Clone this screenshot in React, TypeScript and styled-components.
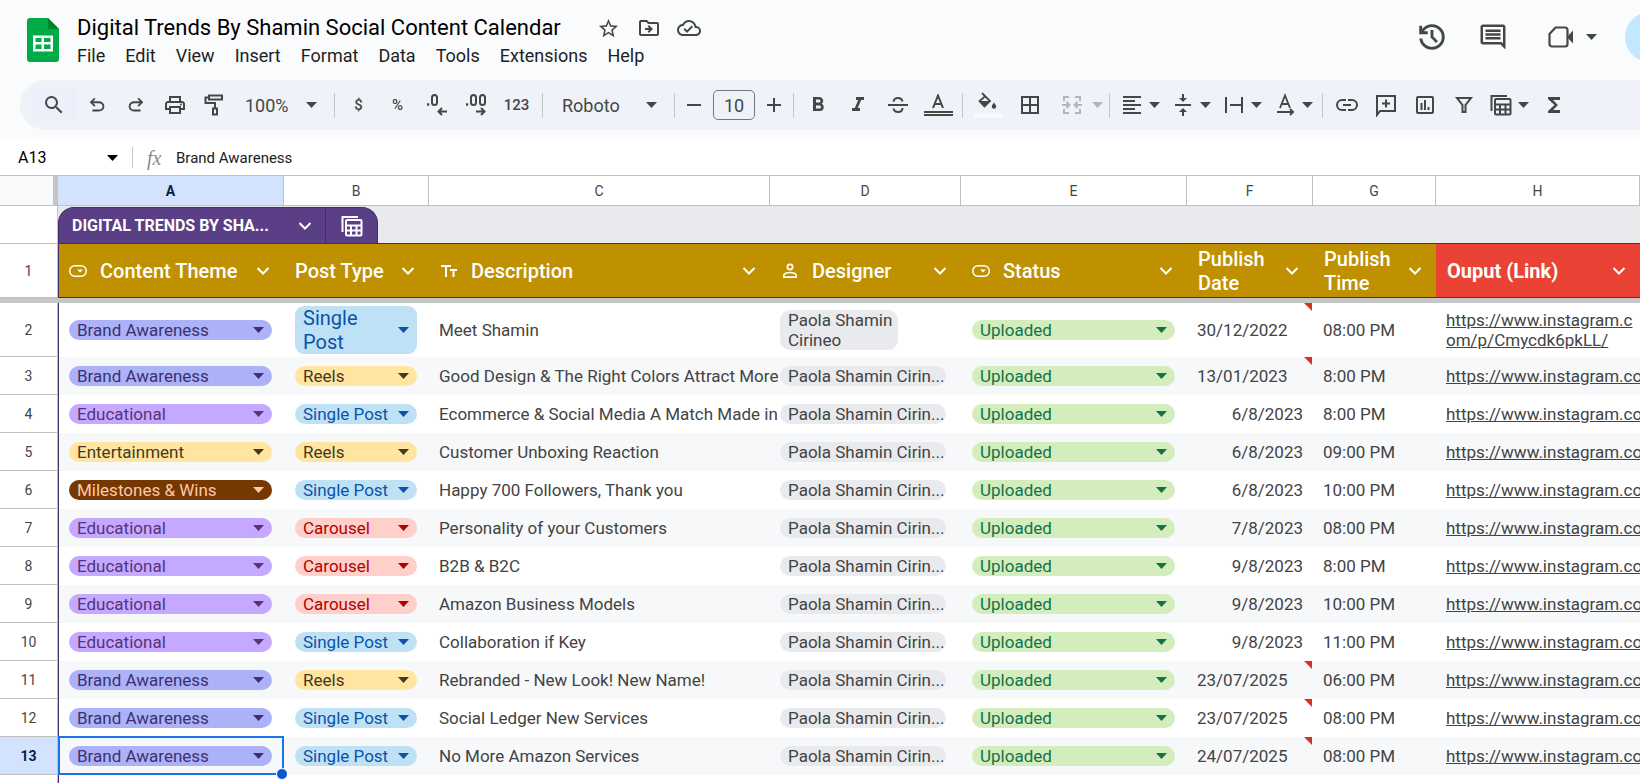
import React from 'react';
import styled, { createGlobalStyle, css } from 'styled-components';
import {
  MdSearch, MdStarBorder, MdOutlineDriveFileMove, MdOutlineCloudDone, MdOutlineComment,
  MdOutlinePrint, MdFormatBold, MdFormatItalic, MdBorderAll, MdFormatAlignLeft,
  MdVerticalAlignCenter, MdFunctions,
} from 'react-icons/md';

const sans = `Roboto, "Liberation Sans", sans-serif`;
const ink = '#444746';
const line = '#c0c0c0';
const tableEdge = '#442f65';

const GlobalStyle = createGlobalStyle`
  *, *::before, *::after { box-sizing: border-box; }
  body { margin: 0; background: #fff; font-family: ${sans}; }
  button, input, select { font-family: inherit; margin: 0; padding: 0; border: 0; background: none; color: inherit; outline: 0; }
  svg { display: block; flex: none; }
`;

const Page = styled.div`
  height: 100vh;
  overflow: hidden;
  display: flex;
  flex-direction: column;
`;

/* ---------- title bar ---------- */
const Top = styled.header`
  flex: none;
  background: #f9fbfd;
  padding-bottom: 10px;
  overflow: hidden;
`;
const TitleBar = styled.div`
  display: flex;
  height: 80px;
  padding-left: 27px;
`;
const LogoLink = styled.a`
  margin-top: 18px;
  width: 32px;
`;
const TitleBlock = styled.div`
  margin-left: 18px;
  padding-top: 12px;
  flex: 1;
  min-width: 0;
`;
const TitleRow = styled.div`
  display: flex;
  align-items: center;
  height: 32px;
`;
const DocTitle = styled.h1`
  margin: 0 28px 0 0;
  font-size: 22px;
  line-height: 32px;
  font-weight: 400;
  color: #000;
  white-space: nowrap;
`;
const TitleIcon = styled.button`
  width: 40px;
  height: 32px;
  display: grid;
  place-items: center;
  color: ${ink};
`;
const MenuBar = styled.nav`
  display: flex;
  gap: 20px;
  height: 24px;
`;
const MenuItem = styled.button`
  font-size: 18px;
  line-height: 24px;
  color: #1f1f1f;
`;
const Actions = styled.div`
  display: flex;
  align-items: center;
  height: 74px;
  margin-right: -35px;
  color: ${ink};
`;
const ActionButton = styled.button<{ $w: number }>`
  display: flex;
  align-items: center;
  justify-content: center;
  gap: 12px;
  width: ${p => p.$w}px;
  height: 48px;
`;
const ShareButton = styled.button`
  width: 50px;
  height: 50px;
  border-radius: 25px;
  background: #c2e7ff;
  margin-left: 4px;
`;

/* ---------- toolbar ---------- */
const Toolbar = styled.div`
  display: flex;
  align-items: center;
  height: 50px;
  margin-left: 20px;
  padding-left: 11px;
  border-radius: 25px 0 0 25px;
  background: #eff2f8;
  color: ${ink};
  white-space: nowrap;
  overflow: hidden;
`;
const Tool = styled.button<{ $w?: number }>`
  width: ${p => p.$w ?? 39}px;
  height: 34px;
  flex: none;
  display: flex;
  align-items: center;
  justify-content: center;
  font-size: 15px;
  font-weight: 500;
`;
const SearchTool = styled(Tool)`
  background: #edf0fa;
  border-radius: 4px;
`;
const DropTool = styled(Tool)<{ $off?: boolean }>`
  justify-content: flex-start;
  padding-left: ${p => (p.$off ? 9 : 6)}px;
  gap: ${p => (p.$off ? 8 : 5)}px;
  opacity: ${p => (p.$off ? 0.35 : 1)};
`;
const Divider = styled.span`
  width: 1px;
  height: 25px;
  margin: 0 4px;
  flex: none;
  background: #c7c7c7;
`;
const PickerBox = styled.label<{ $w: number; $pad: number }>`
  position: relative;
  width: ${p => p.$w}px;
  flex: none;
  select {
    appearance: none;
    width: 100%;
    height: 34px;
    padding-left: ${p => p.$pad}px;
    font-size: 18px;
  }
  svg {
    position: absolute;
    right: 13px;
    top: 14px;
    pointer-events: none;
  }
`;
const SizeInput = styled.input`
  width: 42px;
  height: 30px;
  margin: 0 4px;
  flex: none;
  border: 1px solid #747775;
  border-radius: 5px;
  font-size: 18px;
  text-align: center;
`;
const ColorStack = styled.span<{ $bar: string }>`
  display: flex;
  flex-direction: column;
  align-items: center;
  width: 29px;
  gap: 2px;
  &::after {
    content: '';
    width: 29px;
    height: 5px;
    border: solid ${p => p.$bar};
    border-width: 2px 0;
    background: #f8f9fc;
  }
`;

/* ---------- formula bar ---------- */
const FormulaBar = styled.div`
  display: flex;
  align-items: center;
  height: 36px;
  border-bottom: 1px solid ${line};
  background: #fff;
  flex: none;
`;
const NameBox = styled.input`
  width: 89px;
  margin-left: 18px;
  font-size: 16px;
  color: #000;
`;
const FormulaDivider = styled.span`
  width: 1px;
  height: 21px;
  margin: 0 14px;
  background: #c7c7c7;
`;
const Fx = styled.span`
  width: 18px;
  font: italic 20px/20px "Liberation Serif", serif;
  color: #8a8a8a;
  margin-right: 11px;
`;
const FormulaInput = styled.input`
  flex: 1;
  font-size: 15px;
  color: #202124;
`;

/* ---------- grid ---------- */
const Sheet = styled.table`
  width: 100%;
  table-layout: fixed;
  border-collapse: separate;
  border-spacing: 0;
  th, td { padding: 0; }
`;
const Corner = styled.td`
  background: #f8f9fa;
  border-right: 5px solid #c4c4c4;
  border-bottom: 1px solid ${line};
`;
const Letter = styled.th<{ $on?: boolean }>`
  height: 30px;
  font-size: 14px;
  font-weight: ${p => (p.$on ? 700 : 400)};
  color: ${p => (p.$on ? '#041e49' : ink)};
  background: ${p => (p.$on ? '#d3e3fd' : '#fff')};
  border-right: 1px solid ${line};
  border-bottom: 1px solid ${line};
`;
const RowHead = styled.th<{ $on?: boolean }>`
  font-size: 14px;
  font-weight: ${p => (p.$on ? 700 : 400)};
  color: ${p => (p.$on ? '#041e49' : ink)};
  background: ${p => (p.$on ? '#d3e3fd' : '#fff')};
  border-right: 1px solid ${line};
  border-bottom: 1px solid ${line};
`;
const TabCell = styled.td`
  height: 38px;
  background: #e8eaed;
  border-bottom: 1px solid ${tableEdge};
  vertical-align: bottom;
`;
const Tab = styled.div`
  display: flex;
  width: 320px;
  height: 36px;
  border: 1px solid ${tableEdge};
  border-bottom: 0;
  border-radius: 16px 16px 0 0;
  background: #5b3f86;
  color: #fff;
  overflow: hidden;
`;
const TabName = styled.button`
  flex: 1;
  display: flex;
  align-items: center;
  justify-content: space-between;
  padding: 0 13px;
  font-size: 16px;
  font-weight: 700;
`;
const TabTool = styled.button`
  width: 52px;
  display: grid;
  place-items: center;
  border-left: 1px solid ${tableEdge};
`;
const FieldHead = styled.th<{ $red?: boolean; $first?: boolean }>`
  height: 54px;
  background: ${p => (p.$red ? '#ea4335' : '#bf9000')};
  border-bottom: 1px solid ${tableEdge};
  ${p => p.$first && css`border-left: 1px solid ${tableEdge};`}
  color: #fff;
  font-size: 20px;
  line-height: 24px;
  font-weight: ${p => (p.$red ? 700 : 500)};
  text-align: left;
`;
const FieldInner = styled.div<{ $first?: boolean }>`
  display: flex;
  align-items: center;
  padding: 0 14px 0 ${p => (p.$first ? 10 : 11)}px;
  gap: 13px;
  > span { flex: 1; min-width: 0; }
`;
const HeadChevron = styled.button`
  width: 14px;
  height: 24px;
  margin-left: -12px;
  display: grid;
  place-items: center;
`;
const FreezeBar = styled.td`
  height: 5px;
  background: #c6c6c6;
`;
const Cell = styled.td<{ $band?: boolean; $first?: boolean; $right?: boolean; $anchor?: boolean }>`
  height: 38px;
  background: ${p => (p.$band ? '#f6f8f9' : '#fff')};
  ${p => p.$anchor && css`position: relative;`}
  ${p => p.$first && css`border-left: 1px solid ${tableEdge};`}
  color: #434343;
  font-size: 17px;
  line-height: 20px;
  text-align: ${p => (p.$right ? 'right' : 'left')};
`;
const Text = styled.div`
  padding: 0 10px;
  white-space: nowrap;
`;
const WrappedUrl = styled.div`
  padding: 0 4px 0 10px;
  word-break: break-all;
`;
const UrlLink = styled.a`
  color: #434343;
  text-decoration: underline;
`;
const ChipPad = styled.div<{ $first?: boolean }>`
  padding: 0 12px 0 ${p => (p.$first ? 10 : 11)}px;
`;
const Chip = styled.label<{ $bg: string; $fg: string }>`
  position: relative;
  display: block;
  height: 20px;
  border-radius: 10px;
  background: ${p => p.$bg};
  color: ${p => p.$fg};
  select {
    appearance: none;
    display: block;
    width: 100%;
    height: 20px;
    padding-left: 8px;
    font-size: 17px;
    line-height: 20px;
  }
  svg {
    position: absolute;
    right: 8px;
    top: 7px;
    pointer-events: none;
  }
`;
const TallChip = styled.button<{ $bg: string; $fg: string }>`
  display: flex;
  align-items: center;
  justify-content: space-between;
  width: 100%;
  padding: 0 8px;
  border-radius: 9px;
  background: ${p => p.$bg};
  color: ${p => p.$fg};
  font-size: 20px;
  line-height: 24px;
  text-align: left;
`;
const Person = styled.button<{ $wrap?: boolean }>`
  display: block;
  width: ${p => (p.$wrap ? 118 : 166)}px;
  margin-left: 10px;
  padding: 0 3px 0 8px;
  border-radius: 10px;
  background: #e8eaed;
  color: #434343;
  font-size: 17px;
  line-height: 20px;
  text-align: left;
  white-space: nowrap;
`;
const NoteMark = styled.span`
  position: absolute;
  top: 0;
  right: 1px;
  border-top: 8px solid #d93025;
  border-left: 8px solid transparent;
`;
const Selection = styled.div`
  position: absolute;
  inset: -1px 0 0 -1px;
  border: 2px solid #1a73e8;
  pointer-events: none;
  z-index: 1;
  &::after {
    content: '';
    position: absolute;
    right: -6px;
    bottom: -7px;
    width: 12px;
    height: 12px;
    border: 1px solid #fff;
    border-radius: 50%;
    background: #0b57d0;
  }
`;

/* ---------- icons ---------- */
const Caret = () => (
  <svg width="11" height="6" viewBox="0 0 11 6" fill="currentColor"><path d="M0 0h11L5.500 6z" /></svg>
);
const Chevron = () => (
  <svg width="14" height="10" viewBox="0 0 14 10" fill="none" stroke="currentColor" strokeWidth="2"><path d="M1.500 2 7 7.500 12.500 2" /></svg>
);
const Logo = () => (
  <svg width="32" height="44" viewBox="0 0 32 44">
    <path d="M3 0h18l11 11v30a3 3 0 0 1-3 3H3a3 3 0 0 1-3-3V3a3 3 0 0 1 3-3z" fill="#00ac47" />
    <path d="M21 0l11 11H21z" fill="#00832d" />
    <path d="M6 17.500h20v16H6zm2.500 2.500v4h6v-4zm8.500 0v4h6.500v-4zM8.500 26.500v4.500h6v-4.500zm8.500 0v4.500h6.500v-4.500z" fill="#fff" fillRule="evenodd" />
  </svg>
);
const undoPath = 'M7 19v-2h7.100q1.575 0 2.738-1T18 13.500 16.838 11 14.100 10H7.800l2.600 2.600L9 14 4 9l5-5 1.400 1.400L7.800 8h6.300q2.425 0 4.163 1.575T20 13.500t-1.737 3.925T14.100 19z';
const Undo = () => <svg width="22" height="22" viewBox="0 0 24 24" fill="currentColor"><path d={undoPath} /></svg>;
const Redo = () => <svg width="22" height="22" viewBox="0 0 24 24" fill="currentColor"><path d={undoPath} transform="matrix(-1 0 0 1 24 0)" /></svg>;
const Svg = ({ s = 24, w = 2, children }: { s?: number; w?: number; children: React.ReactNode }) => (
  <svg width={s} height={s} viewBox="0 0 24 24" fill="none" stroke="currentColor" strokeWidth={w}>{children}</svg>
);
const History = () => (
  <svg width="34" height="34" viewBox="0 0 24 24" fill="currentColor">
    <path d="M12 21q-3.450 0-6.012-2.287T3.050 13H5.100q.35 2.600 2.313 4.300T12 19q2.925 0 4.963-2.037T19 12t-2.037-4.962T12 5q-1.725 0-3.225.8T6.250 8H9v2H3V4h2v2.350q1.275-1.600 3.113-2.475T12 3q1.875 0 3.513.713t2.850 1.924 1.925 2.850T21 12t-.712 3.513-1.925 2.850-2.850 1.925T12 21m2.800-4.800L11 12.400V7h2v4.600l3.200 3.200z" />
  </svg>
);
const Strike = () => (
  <Svg><path d="M2 12h20M16.500 8.500C16 6.300 14.500 5 12 5S7.600 6.500 7.600 8.800M7.400 15.500c.6 2.300 2.200 3.500 4.600 3.500s4.500-1.300 4.500-4" /></Svg>
);
const Roller = () => (
  <Svg><path d="M7 2.500h13v4H7zM7 4.500H3.500v5.500h9.500v5M11 15.500h4v6h-4z" /></Svg>
);
const Decimal = ({ more }: { more?: boolean }) => (
  <svg width="22" height="24" viewBox="0 0 22 24" fill="none" stroke="currentColor" strokeWidth="2">
    <path d="M1 11.500h2.200" strokeWidth="2.400" />
    <rect x={6} y="2" width="5" height="10" rx="2.500" />
    {more && <rect x="15" y="2" width="5" height="10" rx="2.500" />}
    {more ? <path d="M11 18.500h8M16 15l3.500 3.500L16 22" /> : <path d="M21 18.500h-8M16 15l-3.500 3.500L16 22" />}
  </svg>
);
const Minus = () => <svg width="14" height="14" viewBox="0 0 14 14"><path d="M0 7h14" stroke="currentColor" strokeWidth="2" /></svg>;
const Plus = () => <svg width="14" height="14" viewBox="0 0 14 14"><path d="M0 7h14M7 0v14" stroke="currentColor" strokeWidth="2" /></svg>;
const LetterA = () => (
  <svg width="16" height="15" viewBox="0 0 16 15" fill="none" stroke="currentColor" strokeWidth="2"><path d="M3 14 8 1.500 13 14M5 10h6" /></svg>
);
const Bucket = () => (
  <svg width="20" height="19" viewBox="0 0 20 19">
    <path d="M4 1l8 8-5.500 5.500L1.500 9 7.500 4" fill="none" stroke="currentColor" strokeWidth="1.800" />
    <path d="M1 9h11l-5.500 6z" fill="currentColor" />
    <path d="M16 10.500s-2.200 2.600-2.200 4.100a2.200 2.200 0 0 0 4.400 0c0-1.500-2.200-4.100-2.200-4.100z" fill="currentColor" />
  </svg>
);
const Merge = () => (
  <Svg><path d="M9 4H4v4M15 4h5v4M9 20H4v-4M15 20h5v-4M2 12h7M22 12h-7M6.500 9l3 3-3 3M17.500 9l-3 3 3 3" /></Svg>
);
const Wrap = () => (
  <Svg><path d="M4 4v16M20 4v16M8 12h12" /></Svg>
);
const Rotate = () => (
  <Svg><path d="M7 15 12 2.500 17 15M8.500 11h7" strokeWidth="1.800" /><path d="M4 19h16M17 16l3 3-3 3" /></Svg>
);
const LinkIcon = () => (
  <Svg><path d="M11 17H7A5 5 0 0 1 7 7h4M13 7h4a5 5 0 0 1 0 10h-4M8 12h8" /></Svg>
);
const AddComment = () => (
  <Svg><path d="M3 22V3h18v15H6zM12 6.500v8M8 10.500h8" /></Svg>
);
const Chart = () => (
  <Svg><rect x="4" y="4" width="16" height="16" rx="1" /><path d="M8.500 10v7M12 7v10M15.500 14v3" /></Svg>
);
const Filter = () => (
  <Svg><path d="M5 5h14l-5.500 7v7h-3v-7z" /></Svg>
);
const TableIcon = () => (
  <Svg><path d="M2.500 18V3H18" /><rect x="6" y="6" width="15.500" height="15.500" rx="1" /><path d="M6 11.500h15.500M6 16.500h15.500M11 11.500v10M16.500 11.500v10" /></Svg>
);
const Video = () => (
  <svg width="26" height="22" viewBox="0 0 26 22">
    <path d="M7.500 1.500H17a2.500 2.500 0 0 1 2.500 2.500v14a2.500 2.500 0 0 1-2.500 2.500H4A2.500 2.500 0 0 1 1.500 18V8z" fill="none" stroke="currentColor" strokeWidth="2.200" />
    <path d="M19 11l6-6.500v13z" fill="currentColor" />
  </svg>
);
const DropField = () => (
  <svg width="18" height="12" viewBox="0 0 18 12"><rect x=".8" y=".8" width="16.400" height="10.400" rx="5" fill="none" stroke="currentColor" strokeWidth="1.500" /><path d="M8 4.500h6l-3 3z" fill="currentColor" /></svg>
);
const TextField = () => (
  <svg width="18" height="14" viewBox="0 0 18 14" fill="none" stroke="currentColor" strokeWidth="2"><path d="M1 2h10M6 2v11M10 6h7M13.500 6v7" /></svg>
);
const PersonField = () => (
  <svg width="18" height="16" viewBox="0 0 18 16" fill="none" stroke="currentColor" strokeWidth="1.700"><circle cx="9" cy="4" r="2.600" /><path d="M2.800 14.200v-2c0-1.600 3.600-2.700 6.200-2.700s6.200 1.100 6.200 2.700v2z" /></svg>
);

/* ---------- data ---------- */
const chipColors: Record<string, [string, string]> = {
  'Brand Awareness': ['#acb2f7', '#3d2f72'],
  Educational: ['#c5a8ff', '#563477'],
  Entertainment: ['#ffe5a0', '#473821'],
  'Milestones & Wins': ['#753800', '#ffc8aa'],
  'Single Post': ['#bfe1f6', '#0a53a8'],
  Reels: ['#ffe5a0', '#473821'],
  Carousel: ['#ffcfc9', '#b10202'],
  Uploaded: ['#d4edbc', '#11734b'],
};

type Row = { theme: string; type: string; text: string; date: string; time: string; note?: boolean };
const rows: Row[] = [
  { theme: 'Brand Awareness', type: 'Single Post', text: 'Meet Shamin', date: '30/12/2022', time: '08:00 PM', note: true },
  { theme: 'Brand Awareness', type: 'Reels', text: 'Good Design & The Right Colors Attract More', date: '13/01/2023', time: '8:00 PM', note: true },
  { theme: 'Educational', type: 'Single Post', text: 'Ecommerce & Social Media A Match Made in', date: '6/8/2023', time: '8:00 PM' },
  { theme: 'Entertainment', type: 'Reels', text: 'Customer Unboxing Reaction', date: '6/8/2023', time: '09:00 PM' },
  { theme: 'Milestones & Wins', type: 'Single Post', text: 'Happy 700 Followers, Thank you', date: '6/8/2023', time: '10:00 PM' },
  { theme: 'Educational', type: 'Carousel', text: 'Personality of your Customers', date: '7/8/2023', time: '08:00 PM' },
  { theme: 'Educational', type: 'Carousel', text: 'B2B & B2C', date: '9/8/2023', time: '8:00 PM' },
  { theme: 'Educational', type: 'Carousel', text: 'Amazon Business Models', date: '9/8/2023', time: '10:00 PM' },
  { theme: 'Educational', type: 'Single Post', text: 'Collaboration if Key', date: '9/8/2023', time: '11:00 PM' },
  { theme: 'Brand Awareness', type: 'Reels', text: 'Rebranded - New Look! New Name!', date: '23/07/2025', time: '06:00 PM', note: true },
  { theme: 'Brand Awareness', type: 'Single Post', text: 'Social Ledger New Services', date: '23/07/2025', time: '08:00 PM', note: true },
  { theme: 'Brand Awareness', type: 'Single Post', text: 'No More Amazon Services', date: '24/07/2025', time: '08:00 PM', note: true },
];

const columns = [
  { letter: 'A', width: 226, name: 'Content Theme', icon: <DropField /> },
  { letter: 'B', width: 145, name: 'Post Type' },
  { letter: 'C', width: 341, name: 'Description', icon: <TextField /> },
  { letter: 'D', width: 191, name: 'Designer', icon: <PersonField /> },
  { letter: 'E', width: 226, name: 'Status', icon: <DropField /> },
  { letter: 'F', width: 126, name: 'Publish Date' },
  { letter: 'G', width: 123, name: 'Publish Time' },
  { letter: 'H', width: 0, name: 'Ouput (Link)' },
];
const menus = ['File', 'Edit', 'View', 'Insert', 'Format', 'Data', 'Tools', 'Extensions', 'Help'];

const ChipSelect = ({ value, label }: { value: string; label: string }) => (
  <Chip $bg={chipColors[value][0]} $fg={chipColors[value][1]}>
    <select aria-label={label} defaultValue={value}><option>{value}</option></select>
    <Caret />
  </Chip>
);

const Header = () => (
  <Top>
    <TitleBar>
      <LogoLink href="#" aria-label="Sheets home"><Logo /></LogoLink>
      <TitleBlock>
        <TitleRow>
          <DocTitle>Digital Trends By Shamin Social Content Calendar</DocTitle>
          <TitleIcon aria-label="Star"><MdStarBorder size={23} /></TitleIcon>
          <TitleIcon aria-label="Move"><MdOutlineDriveFileMove size={24} /></TitleIcon>
          <TitleIcon aria-label="Saved to Drive"><MdOutlineCloudDone size={24} /></TitleIcon>
        </TitleRow>
        <MenuBar>{menus.map(m => <MenuItem key={m}>{m}</MenuItem>)}</MenuBar>
      </TitleBlock>
      <Actions>
        <ActionButton $w={61} aria-label="Version history"><History /></ActionButton>
        <ActionButton $w={61} aria-label="Comments"><MdOutlineComment size={30} /></ActionButton>
        <ActionButton $w={98} aria-label="Join a call"><Video /><Caret /></ActionButton>
        <ShareButton aria-label="Share" />
      </Actions>
    </TitleBar>
    <Toolbar role="toolbar" aria-label="Main">
      <SearchTool $w={46} aria-label="Search"><MdSearch size={24} /></SearchTool>
      <Tool aria-label="Undo"><Undo /></Tool>
      <Tool aria-label="Redo"><Redo /></Tool>
      <Tool aria-label="Print"><MdOutlinePrint size={24} /></Tool>
      <Tool aria-label="Paint format"><Roller /></Tool>
      <PickerBox $w={97} $pad={12}><select aria-label="Zoom"><option>100%</option></select><Caret /></PickerBox>
      <Divider />
      <Tool aria-label="Currency">$</Tool>
      <Tool aria-label="Percent">%</Tool>
      <Tool aria-label="Decrease decimals"><Decimal /></Tool>
      <Tool aria-label="Increase decimals"><Decimal more /></Tool>
      <Tool $w={43} aria-label="More formats">123</Tool>
      <Divider />
      <PickerBox $w={123} $pad={15}><select aria-label="Font"><option>Roboto</option></select><Caret /></PickerBox>
      <Divider />
      <Tool $w={30} aria-label="Smaller"><Minus /></Tool>
      <SizeInput aria-label="Font size" defaultValue="10" />
      <Tool $w={30} aria-label="Larger"><Plus /></Tool>
      <Divider />
      <Tool $w={40} aria-label="Bold"><MdFormatBold size={24} /></Tool>
      <Tool $w={40} aria-label="Italic"><MdFormatItalic size={24} /></Tool>
      <Tool $w={40} aria-label="Strikethrough"><Strike /></Tool>
      <Tool $w={40} aria-label="Text color"><ColorStack $bar={ink}><LetterA /></ColorStack></Tool>
      <Divider />
      <Tool $w={42} aria-label="Fill color"><ColorStack $bar="#f8f9fc"><Bucket /></ColorStack></Tool>
      <Tool $w={42} aria-label="Borders"><MdBorderAll size={24} /></Tool>
      <DropTool $w={54} $off aria-label="Merge cells"><Merge /><Caret /></DropTool>
      <Divider />
      <DropTool $w={51} aria-label="Horizontal align"><MdFormatAlignLeft size={24} /><Caret /></DropTool>
      <DropTool $w={51} aria-label="Vertical align"><MdVerticalAlignCenter size={24} /><Caret /></DropTool>
      <DropTool $w={51} aria-label="Text wrapping"><Wrap /><Caret /></DropTool>
      <DropTool $w={51} aria-label="Text rotation"><Rotate /><Caret /></DropTool>
      <Divider />
      <Tool aria-label="Insert link"><LinkIcon /></Tool>
      <Tool aria-label="Insert comment"><AddComment /></Tool>
      <Tool aria-label="Insert chart"><Chart /></Tool>
      <Tool aria-label="Create a filter"><Filter /></Tool>
      <DropTool $w={51} aria-label="Table views"><TableIcon /><Caret /></DropTool>
      <Tool aria-label="Functions"><MdFunctions size={24} /></Tool>
    </Toolbar>
  </Top>
);

const Grid = () => (
  <Sheet>
    <colgroup>
      <col style={{ width: 58 }} />
      {columns.map(c => <col key={c.letter} style={c.width ? { width: c.width } : undefined} />)}
    </colgroup>
    <thead>
      <tr>
        <Corner />
        {columns.map(c => <Letter key={c.letter} $on={c.letter === 'A'}>{c.letter}</Letter>)}
      </tr>
      <tr>
        <RowHead aria-hidden="true" />
        <TabCell colSpan={8}>
          <Tab>
            <TabName>DIGITAL TRENDS BY SHA...<Chevron /></TabName>
            <TabTool aria-label="Table views"><TableIcon /></TabTool>
          </Tab>
        </TabCell>
      </tr>
      <tr>
        <RowHead>1</RowHead>
        {columns.map((c, i) => (
          <FieldHead key={c.letter} $first={i === 0} $red={c.letter === 'H'}>
            <FieldInner $first={i === 0}>
              {c.icon}
              <span>{c.name}</span>
              <HeadChevron aria-label={`${c.name} options`}><Chevron /></HeadChevron>
            </FieldInner>
          </FieldHead>
        ))}
      </tr>
      <tr><FreezeBar colSpan={9} /></tr>
    </thead>
    <tbody>
      {rows.map((r, i) => {
        const n = i + 2;
        const band = n % 2 === 1;
        const tall = i === 0;
        return (
          <tr key={n} style={tall ? { height: 54 } : undefined}>
            <RowHead $on={n === 13}>{n}</RowHead>
            <Cell $band={band} $first $anchor={n === 13}>
              <ChipPad $first><ChipSelect value={r.theme} label="Content theme" /></ChipPad>
              {n === 13 && <Selection />}
            </Cell>
            <Cell $band={band}>
              <ChipPad>
                {tall
                  ? <TallChip $bg="#bfe1f6" $fg="#0a53a8"><span>Single<br />Post</span><Caret /></TallChip>
                  : <ChipSelect value={r.type} label="Post type" />}
              </ChipPad>
            </Cell>
            <Cell $band={band}><Text>{r.text}</Text></Cell>
            <Cell $band={band}>
              <Person $wrap={tall}>{tall ? <>Paola Shamin<br />Cirineo</> : 'Paola Shamin Cirin...'}</Person>
            </Cell>
            <Cell $band={band}><ChipPad><ChipSelect value="Uploaded" label="Status" /></ChipPad></Cell>
            <Cell $band={band} $anchor={r.note} $right={r.date.length < 10}>
              <Text>{r.date}</Text>
              {r.note && <NoteMark />}
            </Cell>
            <Cell $band={band}><Text>{r.time}</Text></Cell>
            <Cell $band={band}>
              {tall
                ? <WrappedUrl><UrlLink href="#">https://www.instagram.com/p/Cmycdk6pkLL/</UrlLink></WrappedUrl>
                : <Text><UrlLink href="#">https://www.instagram.com</UrlLink></Text>}
            </Cell>
          </tr>
        );
      })}
      <tr>
        <RowHead aria-hidden="true" />
        <Cell $first colSpan={8} />
      </tr>
    </tbody>
  </Sheet>
);

export default function App() {
  return (
    <Page>
      <GlobalStyle />
      <Header />
      <FormulaBar>
        <NameBox aria-label="Name box" defaultValue="A13" />
        <Caret />
        <FormulaDivider />
        <Fx>fx</Fx>
        <FormulaInput aria-label="Formula" defaultValue="Brand Awareness" />
      </FormulaBar>
      <Grid />
    </Page>
  );
}
